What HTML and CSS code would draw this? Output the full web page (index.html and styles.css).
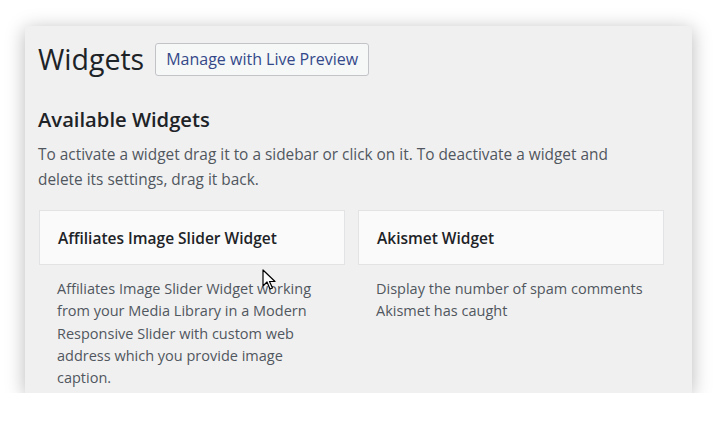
FILE: index.html
```html
<!DOCTYPE html>
<html>
<head>
<meta charset="utf-8">
<link rel="stylesheet" href="styles.css">
</head>
<body>
<div class="panel">
  <div class="head">
    <h1 class="title">Widgets</h1>
    <a class="btn">Manage with Live Preview</a>
  </div>
  <h2 class="sub">Available Widgets</h2>
  <p class="intro">To activate a widget drag it to a sidebar or click on it. To deactivate a widget and delete its settings, drag it back.</p>
  <div class="grid">
    <div class="widget">
      <div class="wtitle">Affiliates Image Slider Widget</div>
      <div class="wdesc">Affiliates Image Slider Widget working from your Media Library in a Modern Responsive Slider with custom web address which you provide image caption.</div>
    </div>
    <div class="widget">
      <div class="wtitle">Akismet Widget</div>
      <div class="wdesc">Display the number of spam comments Akismet has caught</div>
    </div>
  </div>
  <svg class="cursor" width="14" height="22" viewBox="0 0 14 22"><path d="M1 1 L1 17 L5 13 L8 20 L10.5 19 L7.5 12.5 L13 12.5 Z" fill="#fff" stroke="#000" stroke-width="1.2" stroke-linejoin="round"/></svg>
</div>
</body>
</html>
```
FILE: styles.css
```css
html, body { margin: 0; padding: 0; background: #fff; }
body { font-family: "Open Sans", "Noto Sans", sans-serif; color: #1d2327; }
.panel {
  position: relative;
  margin: 26px 0 0 25px;
  width: 667px;
  height: 367px;
  box-sizing: border-box;
  background: #f0f0f1;
  box-shadow: 0 3px 18px rgba(0,0,0,0.28);
  padding: 14px 0 0 13px;
  overflow: hidden;
}
.head { display: flex; align-items: center; gap: 11px; }
.title { margin: 0; font-size: 28.5px; font-weight: 400; line-height: 38px; color: #1d2327; }
.btn {
  display: inline-block;
  padding: 0 10px;
  height: 33px;
  line-height: 31px;
  box-sizing: border-box;
  border: 1px solid #c3c4c7;
  border-radius: 3px;
  background: #f6f7f7;
  color: #34498a;
  font-size: 16px;
  font-weight: 500;
}
.sub { margin: 28px 0 0 0; font-size: 20.2px; font-weight: 600; line-height: 26px; color: #1d2327; }
.intro { margin: 10px 0 0 0; width: 595px; font-size: 15.4px; line-height: 25px; color: #50575e; }
.grid { display: grid; grid-template-columns: 306px 306px; gap: 13px; margin-top: 18px; margin-left: 1px; }
.widget { display: flex; flex-direction: column; }
.wtitle {
  height: 55px;
  box-sizing: border-box;
  padding: 0 18px;
  line-height: 55px;
  background: #fafafa;
  border: 1px solid #e2e3e5;
  font-size: 15.5px;
  font-weight: 600;
  color: #1d2327;
}
.wdesc { padding: 13px 18px 0 18px; font-size: 14.5px; line-height: 22.3px; color: #50575e; }
.cursor { position: absolute; left: 237px; top: 243px; }
```
